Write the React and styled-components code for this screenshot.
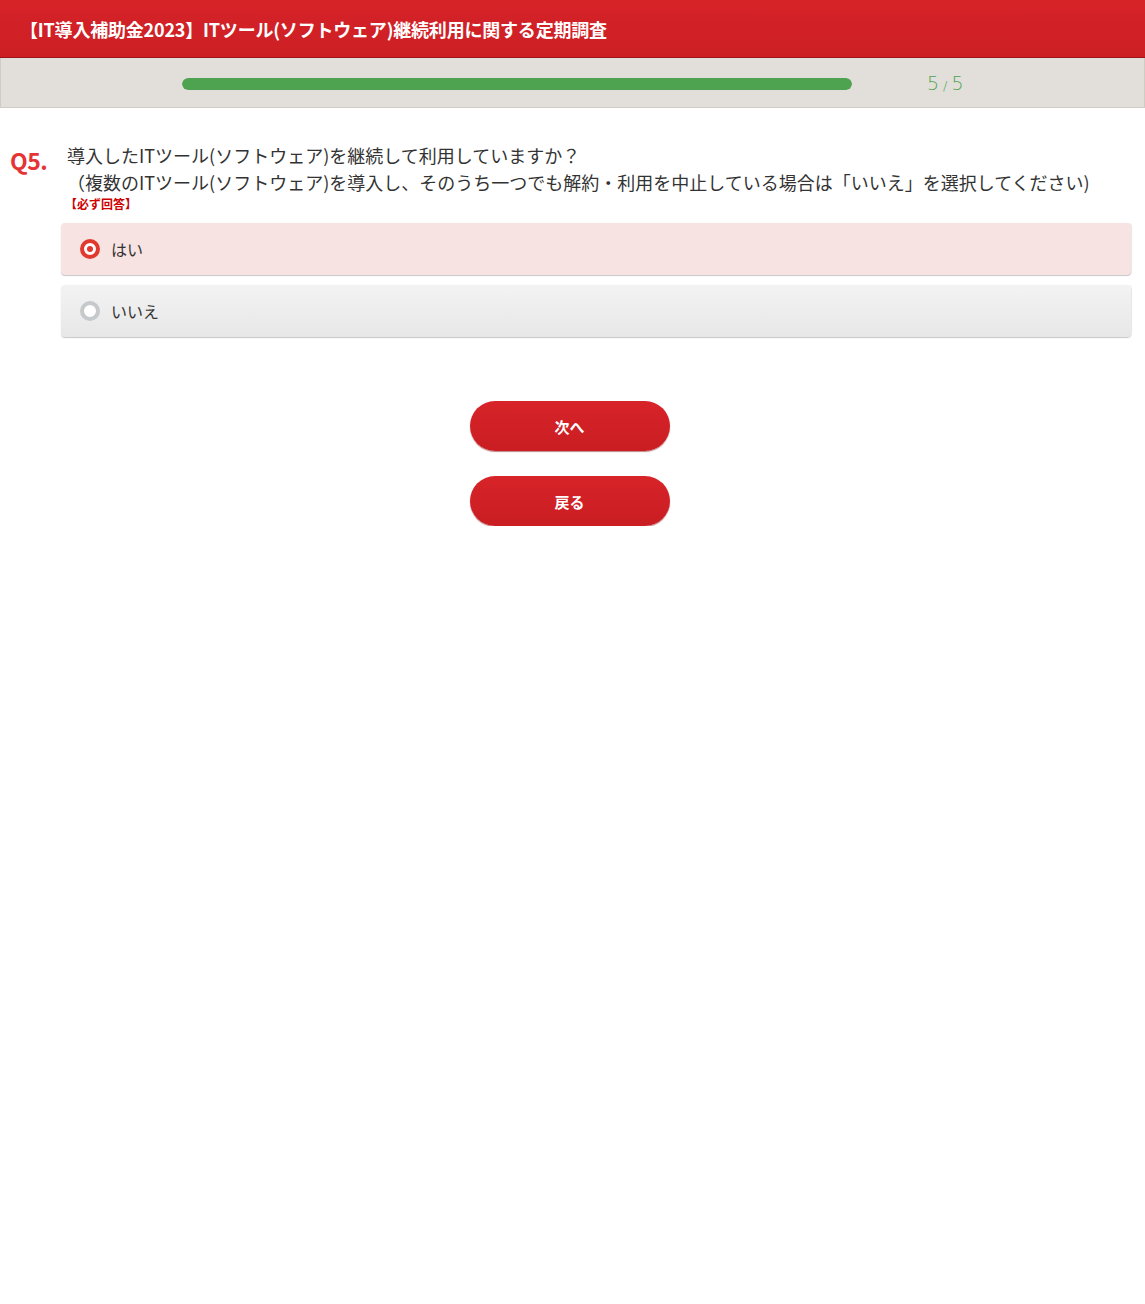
import React from "react";
import styled, { createGlobalStyle } from "styled-components";

const Global = createGlobalStyle`
  html, body { margin: 0; padding: 0; background: #fff; }
  body { font-family: "Noto Sans CJK JP", "Noto Sans", sans-serif; color: #333; }
  * { box-sizing: border-box; }
`;

const Header = styled.header`
  height: 58px;
  background: linear-gradient(#d62328, #cc1f24);
  border-bottom: 1px solid #9c1418;
  display: flex;
  align-items: center;
  padding-left: 20px;
`;

const Title = styled.h1`
  margin: 0;
  font-size: 18px;
  font-weight: 700;
  color: #fff;
  letter-spacing: -0.2px;
`;

const ProgressBar = styled.div`
  height: 50px;
  background: #e2dfda;
  border-bottom: 1px solid #cfcbc5;
  border-left: 1px solid #cfcbc5;
  border-right: 1px solid #cfcbc5;
  display: flex;
  align-items: center;
  padding-left: 181px;
`;

const Track = styled.div`
  width: 670px;
  height: 12px;
  border-radius: 6px;
  background: #d0ccc6;
  overflow: hidden;
  margin-top: 2px;
`;

const Fill = styled.div`
  height: 100%;
  background: #4ea350;
  border-radius: 6px;
`;

const Count = styled.span`
  margin-left: 75px;
  font-family: "DejaVu Sans", sans-serif;
  font-weight: 200;
  font-size: 19px;
  color: #4ea350;
  letter-spacing: 1px;
  margin-top: 1px;
`;

const Slash = styled.span`
  font-size: 13px;
  margin: 0 3px;
`;

const Question = styled.section`
  display: flex;
  padding: 34px 14px 0 10px;
`;

const QNum = styled.div`
  width: 57px;
  flex-shrink: 0;
  font-size: 23px;
  font-weight: 700;
  color: #e53434;
  letter-spacing: -0.5px;
  line-height: 1;
  padding-top: 7px;
`;

const QBody = styled.div`
  flex: 1;
`;

const QText = styled.p`
  margin: 0;
  font-size: 18px;
  line-height: 27px;
  color: #333;
`;

const Required = styled.div`
  font-size: 12px;
  font-weight: 700;
  color: #cc0000;
  line-height: 14px;
  margin-top: 1px;
  margin-left: -2px;
`;

const Options = styled.div`
  display: flex;
  flex-direction: column;
  gap: 10px;
  margin-top: 12px;
  margin-left: -6px;
`;

const Option = styled.label`
  display: flex;
  align-items: center;
  height: 52px;
  padding-left: 19px;
  border-radius: 4px;
  background: ${(p) =>
    p.$checked ? "#f8e3e3" : "linear-gradient(#f3f3f3, #e7e7e7)"};
  box-shadow: 0 1px 1px rgba(0, 0, 0, 0.22), 1px 0 1px rgba(0, 0, 0, 0.08);
  font-size: 16px;
  color: #333;
  cursor: pointer;
`;

const Radio = styled.span`
  width: 20px;
  height: 20px;
  border-radius: 50%;
  border: 4px solid ${(p) => (p.$checked ? "#e03a2f" : "#c6c9cc")};
  background: #fff;
  display: flex;
  align-items: center;
  justify-content: center;
  margin-right: 11px;
  &::after {
    content: "";
    width: 6px;
    height: 6px;
    border-radius: 50%;
    background: ${(p) => (p.$checked ? "#e03a2f" : "transparent")};
  }
`;

const OptionLabel = styled.span`
  margin-top: 0;
`;

const Buttons = styled.div`
  display: flex;
  flex-direction: column;
  align-items: center;
  gap: 25px;
  margin-top: 64px;
  padding-right: 6px;
`;

const Button = styled.button`
  width: 200px;
  height: 50px;
  border-radius: 25px;
  border: none;
  background: linear-gradient(#d72429, #c91d22);
  box-shadow: 0 1px 1px rgba(120, 10, 10, 0.5);
  color: #fff;
  font-family: inherit;
  font-size: 15px;
  font-weight: 700;
  cursor: pointer;
`;

export default function App() {
  return (
    <>
      <Global />
      <Header>
        <Title>【IT導入補助金2023】ITツール(ソフトウェア)継続利用に関する定期調査</Title>
      </Header>
      <ProgressBar>
        <Track>
          <Fill style={{ width: "100%" }} />
        </Track>
        <Count>
          5<Slash>/</Slash>5
        </Count>
      </ProgressBar>
      <Question>
        <QNum>Q5.</QNum>
        <QBody>
          <QText>
            導入したITツール(ソフトウェア)を継続して利用していますか？
            <br />
            （複数のITツール(ソフトウェア)を導入し、そのうち一つでも解約・利用を中止している場合は「いいえ」を選択してください)
          </QText>
          <Required>【必ず回答】</Required>
          <Options>
            <Option $checked>
              <Radio $checked />
              <OptionLabel>はい</OptionLabel>
            </Option>
            <Option>
              <Radio />
              <OptionLabel>いいえ</OptionLabel>
            </Option>
          </Options>
        </QBody>
      </Question>
      <Buttons>
        <Button>次へ</Button>
        <Button>戻る</Button>
      </Buttons>
    </>
  );
}
